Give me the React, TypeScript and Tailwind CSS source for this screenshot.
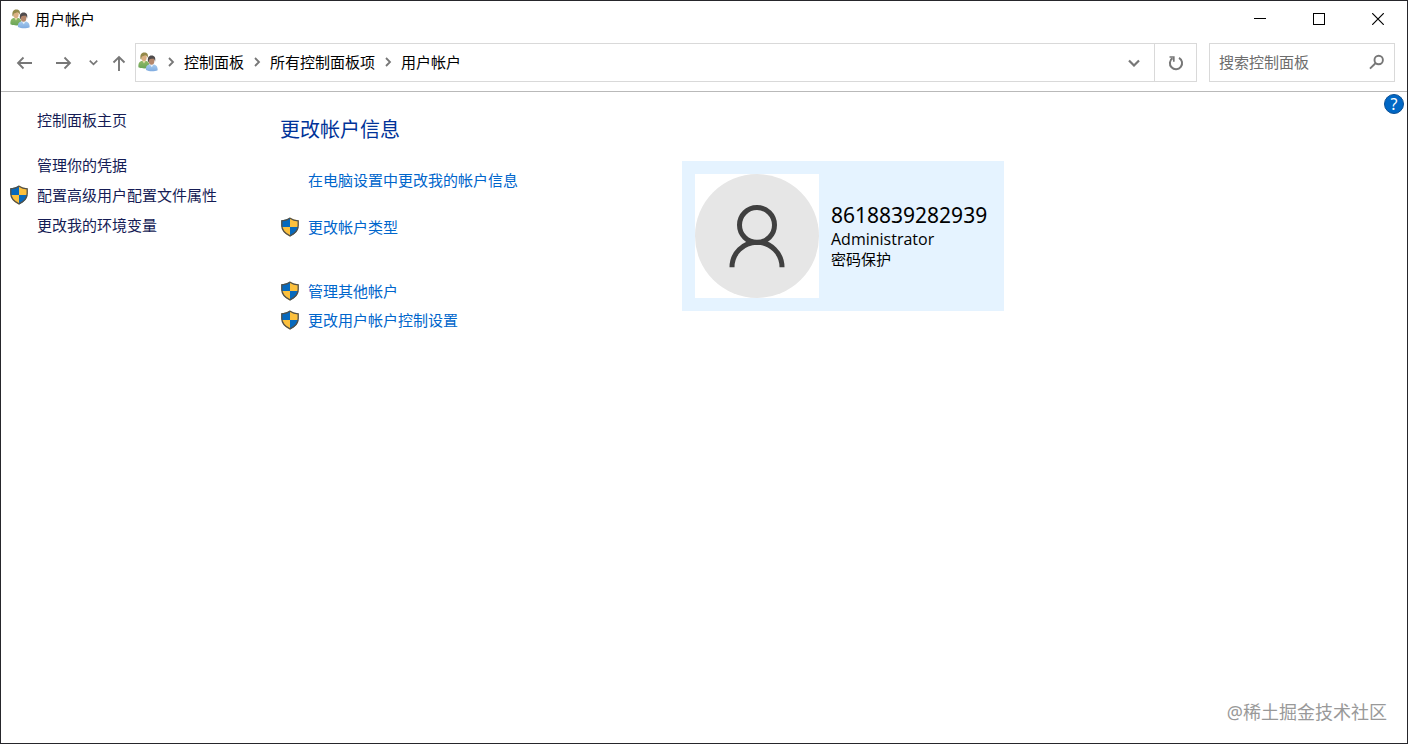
import { useState } from "react";
import type { ReactNode } from "react";

const sidebarLinks = [
  { name: "管理你的凭据", shield: false },
  { name: "配置高级用户配置文件属性", shield: true },
  { name: "更改我的环境变量", shield: false },
];

const breadcrumbs = ["控制面板", "所有控制面板项", "用户帐户"];

const UsersIcon = () => (
  <svg viewBox="0 0 20 20" className="h-5 w-5 shrink-0" aria-hidden="true">
    <defs>
      <linearGradient id="green" x1="0" y1="0" x2="0" y2="1">
        <stop offset="0" stopColor="#8fb868" />
        <stop offset="1" stopColor="#6aa557" />
      </linearGradient>
      <linearGradient id="blue" x1="0" y1="0" x2="0" y2="1">
        <stop offset="0" stopColor="#a6cbee" />
        <stop offset="1" stopColor="#7fabe0" />
      </linearGradient>
    </defs>
    {/* back figure */}
    <path d="M.4 15.300c-.2-3.300.4-5.400 2.800-6.300h5.400c2 .6 3 2.600 3 6.800-3.400 1-8.400.9-11.200-.5z" fill="url(#green)" />
    <path d="M4.200 8.800l1.800 2.800 1.800-2.800z" fill="#e6dcae" />
    <ellipse cx="6" cy="5.200" rx="2.700" ry="3.900" fill="#dbb083" />
    <path d="M2.500 7C1.900 3 3.300.6 6.200.6s4.400 1.700 3.500 5.400c-.4-1.500-1-2.300-2-2.800-1.500.6-3.200.7-3.700 1.300-.5.600-.5 1.500-.7 2.900z" fill="#93894a" />
    {/* front figure */}
    <path d="M8 18c-.4-3 .6-4.900 3-5.500h5.200c2.300.6 3.500 2.500 3.500 5.700-3 1.500-8.600 1.500-11.700-.2z" fill="url(#blue)" />
    <path d="M11.500 12l2.300 3.200 2-3.200z" fill="#e8f1fb" />
    <ellipse cx="13.500" cy="8.700" rx="2.900" ry="4.100" fill="#b4866a" />
    <path d="M10 9.800c-.7-4.200.6-6.300 3.600-6.300s4.300 2.200 3.500 5.900c-.5-1.700-1-2.400-1.700-2.900-1.400.4-3.100.2-3.700.8-.6.500-.8 1.300-.9 2.600z" fill="#4f4b4c" />
  </svg>
);

const ShieldIcon = () => (
  <svg viewBox="0 0 20 20" className="h-5 w-5 shrink-0" aria-hidden="true">
    <path d="M10 .6C7.500 2.400 4.600 3.200 1.500 3.300v5.200c0 5 3.400 8.600 8.500 11 5.100-2.400 8.500-6 8.500-11V3.300C15.400 3.200 12.500 2.400 10 .6z" fill="#fcc03c" />
    <path d="M10 .6C7.500 2.400 4.600 3.200 1.500 3.300v5.200c0 .6 0 1.100.1 1.600H10z" fill="#0669bd" />
    <path d="M10 10.100h8.400c-.6 4.200-3.800 7.300-8.400 9.400z" fill="#0669bd" />
    <path d="M10 1.200C7.500 2.900 4.800 3.700 1.800 3.800v4.700c0 4.700 3.400 8.100 8.200 10.400 4.800-2.300 8.200-5.700 8.200-10.400V3.800C15.200 3.700 12.500 2.900 10 1.200z" fill="none" stroke="#50504c" strokeWidth="1.300" />
  </svg>
);

const ChevronRight = () => (
  <svg viewBox="0 0 8 10" className="h-[10px] w-2" fill="none" stroke="#777" strokeWidth="1.800" aria-hidden="true">
    <path d="M2 1l4 4-4 4" />
  </svg>
);

const ChevronDown = ({ className }: { className: string }) => (
  <svg viewBox="0 0 12 8" className={className} fill="none" stroke="#777" strokeWidth="2.200" aria-hidden="true">
    <path d="M1 1.500l5 5 5-5" />
  </svg>
);

const TaskLink = ({
  children,
  shield = false,
  className,
}: {
  children: ReactNode;
  shield?: boolean;
  className: string;
}) => (
  <div className={`flex items-center gap-2 ${className}`}>
    <span className="w-5 shrink-0">{shield && <ShieldIcon />}</span>
    <a href="#" className="whitespace-nowrap hover:underline">
      {children}
    </a>
  </div>
);

const TitleBar = () => (
  <header className="flex h-9 items-center justify-between">
    <div className="flex items-center gap-[5px] pl-[9px]">
      <UsersIcon />
      <h1>用户帐户</h1>
    </div>
    <div className="flex self-stretch">
      <button aria-label="最小化" className="flex w-[59px] items-center justify-center hover:bg-gray-200">
        <svg viewBox="0 0 12 12" className="h-3 w-3" stroke="#000" shapeRendering="crispEdges">
          <path d="M0 5.500h12" />
        </svg>
      </button>
      <button aria-label="最大化" className="flex w-[59px] items-center justify-center hover:bg-gray-200">
        <svg viewBox="0 0 12 12" className="h-3 w-3" fill="none" stroke="#000" shapeRendering="crispEdges">
          <path d="M.5.5h11v11H.5z" />
        </svg>
      </button>
      <button aria-label="关闭" className="flex w-[59px] items-center justify-center hover:bg-red-600">
        <svg viewBox="0 0 12 12" className="h-3 w-3" stroke="#000" strokeWidth="1.200">
          <path d="M.2.2l11.600 11.600M11.800.2L.2 11.800" />
        </svg>
      </button>
    </div>
  </header>
);

const Toolbar = () => {
  const [query, setQuery] = useState("");

  return (
    <div className="flex items-center border-b border-[#b9b9b9] pt-[6px] pr-3 pb-[9px] pl-[15px]">
      {/* History buttons */}
      <div className="flex w-[119px] shrink-0 items-center">
        <button aria-label="后退" className="mr-[22px]">
          <svg viewBox="0 0 17 14" className="h-[14px] w-[17px]" fill="none" stroke="#777" strokeWidth="1.800">
            <path d="M16 7H2M7.500 1.500L2 7l5.500 5.500" />
          </svg>
        </button>
        <button aria-label="前进" className="mr-[17px]">
          <svg viewBox="0 0 17 14" className="h-[14px] w-[17px]" fill="none" stroke="#777" strokeWidth="1.800">
            <path d="M1 7h14M9.500 1.500L15 7l-5.500 5.500" />
          </svg>
        </button>
        <button aria-label="最近位置" className="mr-[14px]">
          <ChevronDown className="h-[7px] w-[9px]" />
        </button>
        <button aria-label="上移" className="pt-[2px]">
          <svg viewBox="0 0 14 17" className="h-[17px] w-[14px]" fill="none" stroke="#777" strokeWidth="1.900">
            <path d="M7 16V2M1.500 7.500L7 2l5.500 5.500" />
          </svg>
        </button>
      </div>

      {/* Address bar */}
      <div className="flex h-[39px] min-w-0 flex-1 border border-[#d9d9d9]">
        <nav aria-label="地址" className="flex min-w-0 flex-1 items-center pb-px pl-[2px]">
          <UsersIcon />
          {breadcrumbs.map((item) => (
            <div key={item} className="flex items-center">
              <span className="flex w-[26px] justify-center">
                <ChevronRight />
              </span>
              <a href="#" className="whitespace-nowrap">
                {item}
              </a>
            </div>
          ))}
        </nav>
        <button aria-label="以前的位置" className="flex w-10 items-center justify-center">
          <ChevronDown className="h-2 w-3" />
        </button>
        <button aria-label="刷新" className="flex w-[42px] items-center justify-center border-l border-[#d9d9d9]">
          <svg viewBox="0 0 16 16" className="h-4 w-4" fill="none" stroke="#777" strokeWidth="2">
            <path d="M11 2.800a6.100 6.100 0 1 1-6.500.3" />
            <path d="M1.500 2h4.300v4.800" strokeWidth="1.700" />
          </svg>
        </button>
      </div>

      {/* Search */}
      <form
        role="search"
        onSubmit={(e) => e.preventDefault()}
        className="ml-3 flex h-[39px] w-[186px] shrink-0 items-center border border-[#d9d9d9] px-[9px] pb-px"
      >
        <input
          type="text"
          aria-label="搜索控制面板"
          placeholder="搜索控制面板"
          value={query}
          onChange={(e) => setQuery(e.target.value)}
          className="min-w-0 flex-1 outline-none placeholder:text-[#6d6d6d]"
        />
        <button aria-label="搜索">
          <svg viewBox="0 0 16 16" className="h-4 w-4" fill="none" stroke="#777" strokeWidth="1.900">
            <circle cx="9.700" cy="6" r="4.200" />
            <path d="M6.700 9L1 14.700" />
          </svg>
        </button>
      </form>
    </div>
  );
};

const AccountCard = () => (
  <section className="mt-[69px] flex h-[150px] w-[322px] shrink-0 items-center gap-3 bg-[#e5f3ff] pl-[13px]">
    <div className="h-[124px] w-[124px] shrink-0 bg-white">
      <svg viewBox="0 0 124 124" className="h-full w-full" fill="none" role="img" aria-label="帐户图片">
        <circle cx="62" cy="62" r="62" fill="#e6e6e6" />
        <circle cx="62" cy="51" r="17.500" stroke="#404040" strokeWidth="5" />
        <path d="M37 93.200a25 25 0 0 1 50 0" stroke="#404040" strokeWidth="5" />
      </svg>
    </div>
    <div className="pb-[2px] leading-5">
      <p className="text-[21px] leading-7">8618839282939</p>
      <p className="font-['Open_Sans',sans-serif] text-[16px]">Administrator</p>
      <p>密码保护</p>
    </div>
  </section>
);

const App = () => {
  return (
    <div className="flex min-h-screen flex-col border border-[#26262b] bg-white font-['Noto_Sans','Noto_Sans_CJK_SC',sans-serif] text-[15px] leading-5 text-black">
      <TitleBar />
      <Toolbar />

      <div className="flex flex-1 items-start">
        {/* Sidebar */}
        <aside className="w-[279px] shrink-0 pt-[13px] pl-2 text-[#151c55]">
          <TaskLink className="mb-[15px] h-[30px]">控制面板主页</TaskLink>
          {sidebarLinks.map((link) => (
            <TaskLink key={link.name} shield={link.shield} className="h-[30px]">
              {link.name}
            </TaskLink>
          ))}
        </aside>

        {/* Main content */}
        <main className="flex flex-1 items-start">
          <div className="w-[402px] shrink-0 pt-[23px] text-[#0066cc]">
            <h2 className="mb-5 text-[20px] leading-[30px] text-[#003399]">更改帐户信息</h2>
            <TaskLink className="mb-[18px] h-[29px]">在电脑设置中更改我的帐户信息</TaskLink>
            <TaskLink shield className="mb-[35px] h-[29px]">更改帐户类型</TaskLink>
            <TaskLink shield className="h-[29px]">管理其他帐户</TaskLink>
            <TaskLink shield className="h-[29px]">更改用户帐户控制设置</TaskLink>
          </div>
          <AccountCard />
        </main>

        <button
          aria-label="帮助"
          className="mt-[2px] mr-[3px] flex h-5 w-5 shrink-0 items-center justify-center rounded-full border border-[#0b4f94] bg-[#0067c5] text-[16px] leading-none text-white"
        >
          ?
        </button>
      </div>

      <footer className="pr-5 pb-[19px] text-right text-[18px] leading-6 text-[#999]">@稀土掘金技术社区</footer>
    </div>
  );
};

export default App;
